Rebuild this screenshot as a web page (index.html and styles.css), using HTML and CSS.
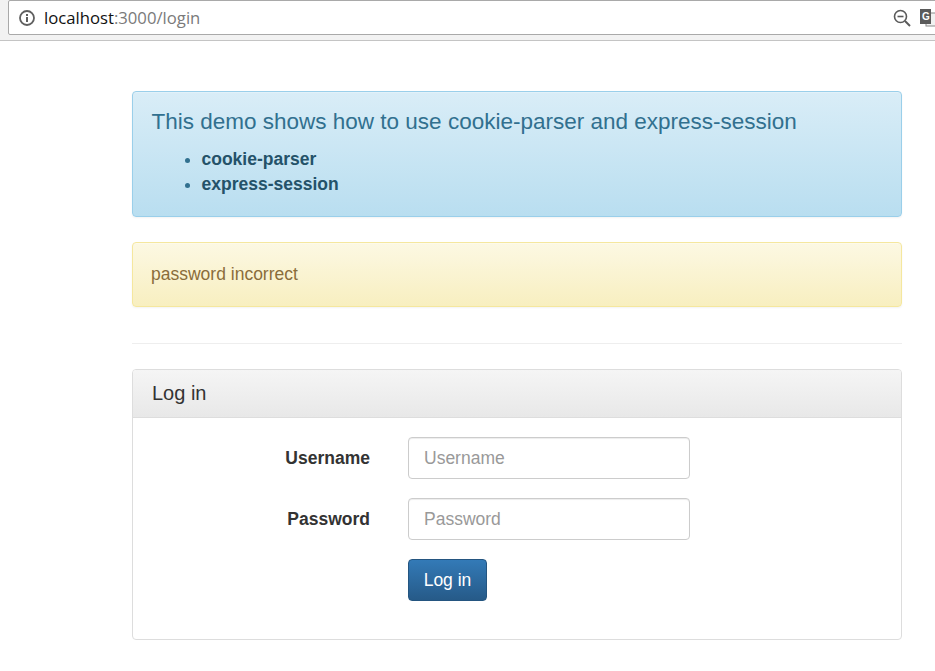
FILE: index.html
```html
<!DOCTYPE html>
<html lang="en">
<head>
    <meta charset="UTF-8">
    <title>Log in</title>
    <link rel="stylesheet" href="styles.css">
</head>
<body>
    <div class="toolbar">
        <div class="address">
            <svg class="info-icon" width="18" height="18" viewBox="0 0 18 18">
                <circle cx="9" cy="9" r="7" fill="none" stroke="#5f5f5f" stroke-width="1.8"/>
                <rect x="8" y="8" width="2" height="5" fill="#5f5f5f"/>
                <rect x="8" y="5" width="2" height="2" fill="#5f5f5f"/>
            </svg>
            <span class="url"><span class="host">localhost</span>:3000/login</span>
            <span class="address-spacer"></span>
            <svg class="zoom-icon" width="18" height="18" viewBox="0 0 18 18">
                <circle cx="7.5" cy="7.5" r="6" fill="none" stroke="#5a5a5a" stroke-width="1.6"/>
                <line x1="4.5" y1="7.5" x2="10.5" y2="7.5" stroke="#5a5a5a" stroke-width="1.6"/>
                <line x1="12" y1="12" x2="17" y2="17" stroke="#5a5a5a" stroke-width="2"/>
            </svg>
            <svg class="translate-icon" width="18" height="18" viewBox="0 0 18 18">
                <rect x="6" y="4" width="12" height="13" fill="#f1f1f1" stroke="#8a8a8a"/>
                <path d="M0 0H11V15H0Z" fill="#5a5a5a"/>
                <text x="2" y="11" class="translate-letter">G</text>
            </svg>
        </div>
    </div>

    <div class="page">
        <div class="alert alert-info">
            <h4>This demo shows how to use cookie-parser and express-session</h4>
            <ul>
                <li><strong>cookie-parser</strong></li>
                <li><strong>express-session</strong></li>
            </ul>
        </div>

        <div class="alert alert-warning">password incorrect</div>

        <hr>

        <div class="panel">
            <div class="panel-heading">Log in</div>
            <form class="panel-body">
                <div class="form-row">
                    <label for="username">Username</label>
                    <input id="username" type="text" placeholder="Username">
                </div>
                <div class="form-row">
                    <label for="password">Password</label>
                    <input id="password" type="password" placeholder="Password">
                </div>
                <div class="form-row">
                    <span class="label-gap"></span>
                    <button class="btn" type="button">Log in</button>
                </div>
            </form>
        </div>
    </div>
</body>
</html>
```

FILE: styles.css
```css
body {
    margin: 0;
    background: #fff;
    color: #333;
    font-family: "Liberation Sans", Arial, sans-serif;
    overflow: hidden;
}

.toolbar {
    height: 40px;
    box-sizing: content-box;
    background: #f2f2f2;
    border-bottom: 1px solid #c4c4c4;
    padding-left: 8px;
    overflow: hidden;
}

.address {
    display: flex;
    align-items: center;
    width: 940px;
    height: 35px;
    box-sizing: border-box;
    background: #fff;
    border: 1px solid #a9a9a9;
    border-radius: 2px;
    padding-left: 9px;
}

.url {
    margin-left: 8px;
    font-family: "Open Sans", "Liberation Sans", sans-serif;
    font-size: 16.7px;
    color: #7a7a7a;
}

.host {
    color: #111;
}

.address-spacer {
    flex: 1;
}

.zoom-icon {
    margin-right: 9px;
}

.translate-icon {
    margin-right: 9px;
}

.translate-letter {
    font-size: 10px;
    font-weight: bold;
    fill: #fff;
}

.page {
    width: 770px;
    margin: 50px 0 0 132px;
}

.alert {
    border: 1px solid;
    border-radius: 4px;
    padding: 0 18px;
    box-shadow: inset 0 1px 0 rgba(255,255,255,0.25), 0 1px 2px rgba(0,0,0,0.05);
}

.alert-info {
    height: 126px;
    box-sizing: border-box;
    margin-bottom: 25px;
    padding-top: 16px;
    padding-left: 18.5px;
    color: #31708f;
    background: linear-gradient(to bottom, #d9edf7, #b9def0);
    border-color: #9acfea;
}

.alert-info h4 {
    margin: 0;
    font-size: 22.5px;
    font-weight: normal;
    line-height: 28px;
}

.alert-info ul {
    margin: 11px 0 0;
    padding-left: 50px;
    font-size: 17.5px;
    line-height: 25px;
}

.alert-info strong {
    color: #245269;
}

.alert-warning {
    height: 65px;
    box-sizing: border-box;
    line-height: 62px;
    font-size: 17.5px;
    color: #8a6d3b;
    background: linear-gradient(to bottom, #fcf8e3, #f8efc0);
    border-color: #f5e79e;
}

hr {
    margin: 36px 0 25px;
    border: 0;
    border-top: 1px solid #eee;
}

.panel {
    height: 271px;
    box-sizing: border-box;
    border: 1px solid #ddd;
    border-radius: 4px;
}

.panel-heading {
    height: 48px;
    box-sizing: border-box;
    padding: 0 19px;
    line-height: 46px;
    font-size: 20px;
    color: #333;
    background: linear-gradient(to bottom, #f5f5f5, #e8e8e8);
    border-bottom: 1px solid #ddd;
    border-radius: 3px 3px 0 0;
}

.panel-body {
    padding-top: 19px;
}

.form-row {
    display: flex;
    align-items: center;
    margin-bottom: 19px;
}

label, .label-gap {
    display: block;
    width: 237px;
    flex: none;
    margin-right: 38px;
    text-align: right;
    font-size: 17.5px;
    font-weight: bold;
}

input {
    width: 282px;
    height: 42px;
    box-sizing: border-box;
    padding: 0 15px;
    border: 1px solid #ccc;
    border-radius: 4px;
    font-family: inherit;
    font-size: 17.5px;
    color: #555;
    box-shadow: inset 0 1px 1px rgba(0,0,0,0.075);
}

input::placeholder {
    color: #999;
}

.btn {
    height: 42px;
    width: 79px;
    padding: 0;
    color: #fff;
    font-family: inherit;
    font-size: 17.5px;
    background: linear-gradient(to bottom, #337ab7, #265a88);
    border: 1px solid #245580;
    border-radius: 4px;
}
```
